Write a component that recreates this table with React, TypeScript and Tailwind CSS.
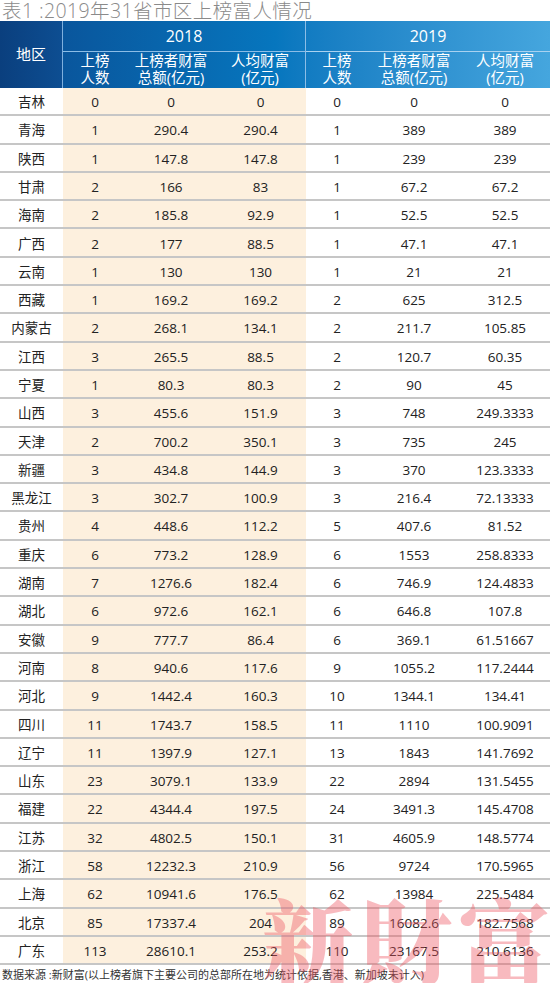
const rows: [string, string, string, string, string, string, string][] = [
  ['吉林', '0', '0', '0', '0', '0', '0'],
  ['青海', '1', '290.4', '290.4', '1', '389', '389'],
  ['陕西', '1', '147.8', '147.8', '1', '239', '239'],
  ['甘肃', '2', '166', '83', '1', '67.2', '67.2'],
  ['海南', '2', '185.8', '92.9', '1', '52.5', '52.5'],
  ['广西', '2', '177', '88.5', '1', '47.1', '47.1'],
  ['云南', '1', '130', '130', '1', '21', '21'],
  ['西藏', '1', '169.2', '169.2', '2', '625', '312.5'],
  ['内蒙古', '2', '268.1', '134.1', '2', '211.7', '105.85'],
  ['江西', '3', '265.5', '88.5', '2', '120.7', '60.35'],
  ['宁夏', '1', '80.3', '80.3', '2', '90', '45'],
  ['山西', '3', '455.6', '151.9', '3', '748', '249.3333'],
  ['天津', '2', '700.2', '350.1', '3', '735', '245'],
  ['新疆', '3', '434.8', '144.9', '3', '370', '123.3333'],
  ['黑龙江', '3', '302.7', '100.9', '3', '216.4', '72.13333'],
  ['贵州', '4', '448.6', '112.2', '5', '407.6', '81.52'],
  ['重庆', '6', '773.2', '128.9', '6', '1553', '258.8333'],
  ['湖南', '7', '1276.6', '182.4', '6', '746.9', '124.4833'],
  ['湖北', '6', '972.6', '162.1', '6', '646.8', '107.8'],
  ['安徽', '9', '777.7', '86.4', '6', '369.1', '61.51667'],
  ['河南', '8', '940.6', '117.6', '9', '1055.2', '117.2444'],
  ['河北', '9', '1442.4', '160.3', '10', '1344.1', '134.41'],
  ['四川', '11', '1743.7', '158.5', '11', '1110', '100.9091'],
  ['辽宁', '11', '1397.9', '127.1', '13', '1843', '141.7692'],
  ['山东', '23', '3079.1', '133.9', '22', '2894', '131.5455'],
  ['福建', '22', '4344.4', '197.5', '24', '3491.3', '145.4708'],
  ['江苏', '32', '4802.5', '150.1', '31', '4605.9', '148.5774'],
  ['浙江', '58', '12232.3', '210.9', '56', '9724', '170.5965'],
  ['上海', '62', '10941.6', '176.5', '62', '13984', '225.5484'],
  ['北京', '85', '17337.4', '204', '89', '16082.6', '182.7568'],
  ['广东', '113', '28610.1', '253.2', '110', '23167.5', '210.6136'],
]

const cols = 'grid grid-cols-[63px_64px_88px_91px_62px_92px_90px]'

const SubHead = ({ a, b }: { a: string; b: string }) => (
  <div className="flex flex-col items-center justify-center leading-[17px]">
    <span>{a}</span>
    <span>{b}</span>
  </div>
)

export default function App() {
  return (
    <div className="relative w-[550px] h-[983px] overflow-hidden bg-white font-['Open_Sans','Noto_Sans_CJK_SC',sans-serif] text-[#222]">
      {/* Title */}
      <div className="h-[21px] pl-[2px] pt-[1px] text-[19.5px] leading-[20px] font-light tracking-[0.4px] text-[#8a8a8a] whitespace-nowrap">
        表1 :2019年31省市区上榜富人情况
      </div>

      {/* Header */}
      <div className={`${cols} grid-rows-[31px_36px] text-white bg-gradient-to-r from-[#0a4d93] via-[#0676be] to-[#45a6de]`}>
        <div className="row-span-2 flex items-center justify-center bg-gradient-to-r from-[#0a3f7e] to-[#0d4e92] text-[15px] border-r border-[#7fb0de]">
          地区
        </div>
        <div className="col-span-3 flex items-center justify-center text-[16px] border-r border-b border-[#8cbde6]">
          2018
        </div>
        <div className="col-span-3 flex items-center justify-center text-[16px] border-b border-[#a9d2f0]">
          2019
        </div>
        <div className="text-[14.5px]"><SubHead a="上榜" b="人数" /></div>
        <div className="text-[14.5px]"><SubHead a="上榜者财富" b="总额(亿元)" /></div>
        <div className="text-[14.5px] border-r border-[#8cbde6]"><SubHead a="人均财富" b="(亿元)" /></div>
        <div className="text-[14.5px]"><SubHead a="上榜" b="人数" /></div>
        <div className="text-[14.5px]"><SubHead a="上榜者财富" b="总额(亿元)" /></div>
        <div className="text-[14.5px]"><SubHead a="人均财富" b="(亿元)" /></div>
      </div>

      {/* Body */}
      <div className="relative">
        <div className="absolute left-[63px] top-0 bottom-0 w-[243px] bg-[#fdf0de]" />
        {rows.map((r) => (
          <div key={r[0]} className={`${cols} relative h-[28.3px] border-b-2 border-[#c6c6c6] text-[13.5px]`}>
            {r.map((v, i) => (
              <div key={i} className="flex items-center justify-center pt-[2px]">
                {v}
              </div>
            ))}
          </div>
        ))}
      </div>

      {/* Footer */}
      <div className="pl-[2px] pt-[2px] text-[11px] leading-[15px] text-[#333] whitespace-nowrap">
        数据来源 :新财富(以上榜者旗下主要公司的总部所在地为统计依据,香港、新加坡未计入)
      </div>

      {/* Watermark */}
      <div className="pointer-events-none absolute left-[262px] top-[891px] flex gap-[6px] text-[92px] leading-none font-black text-[#ee5560] opacity-40 font-['Noto_Serif_CJK_TC','Noto_Sans_CJK_TC',serif]">
        <span>新</span>
        <span>財</span>
        <span>富</span>
      </div>
    </div>
  )
}
